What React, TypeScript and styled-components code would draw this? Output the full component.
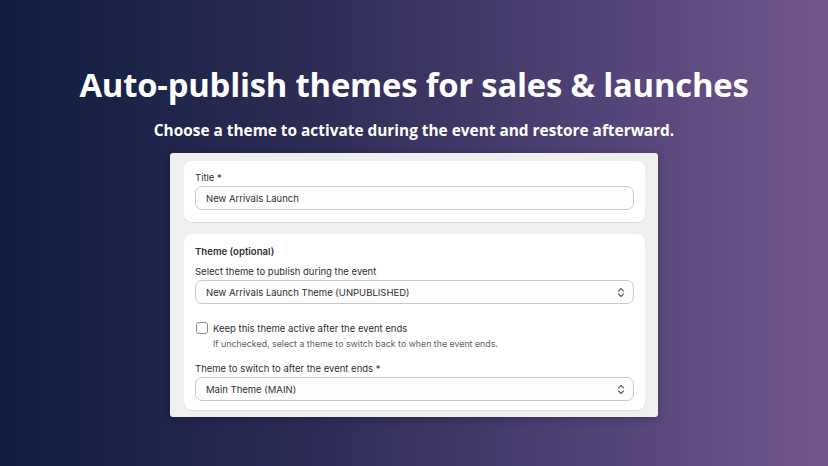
import styled, { createGlobalStyle } from 'styled-components';

const GlobalStyle = createGlobalStyle`
    html, body {
        margin: 0;
        padding: 0;
    }

    body {
        font-family: Inter, "Noto Sans", sans-serif;
    }
`;

const Page = styled.main`
    width: 828px;
    height: 466px;
    box-sizing: border-box;
    background: linear-gradient(90deg, #0f1c3e 0%, #2f2d57 40%, #54457a 75%, #72578c 100%);
    display: flex;
    flex-direction: column;
    align-items: center;
    padding-top: 63px;
    overflow: hidden;
`;

const Headline = styled.h1`
    margin: 0;
    color: #ffffff;
    font-family: "Open Sans", sans-serif;
    font-weight: 700;
    font-size: 32.8px;
    line-height: 44px;
    letter-spacing: -0.2px;
`;

const Subline = styled.p`
    margin: 14px 0 0;
    color: #ffffff;
    font-family: "Open Sans", sans-serif;
    font-weight: 700;
    font-size: 15.4px;
    line-height: 20px;
`;

const Panel = styled.section`
    margin-top: 12px;
    width: 488px;
    box-sizing: border-box;
    background: #efefef;
    border-radius: 3px;
    padding: 8px 13px 7px 14px;
    display: flex;
    flex-direction: column;
    gap: 12px;
    box-shadow: 0 2px 8px rgba(0, 0, 0, 0.25);
`;

const Card = styled.div<{ $bottom: number }>`
    background: #ffffff;
    border-radius: 8px;
    padding: 11px 11px ${(p) => p.$bottom}px;
    display: flex;
    flex-direction: column;
    box-shadow: 0 1px 0 rgba(0, 0, 0, 0.08);
`;

const Heading = styled.div`
    font-size: 9.6px;
    font-weight: 600;
    color: #303030;
    line-height: 14px;
    margin-bottom: 7px;
`;

const Label = styled.label<{ $gap?: number }>`
    font-size: 9.5px;
    color: #303030;
    line-height: 12px;
    margin-top: ${(p) => p.$gap ?? 0}px;
    margin-bottom: 2px;
`;

const Field = styled.div`
    height: 24px;
    box-sizing: border-box;
    border: 1px solid #c9c9c9;
    border-radius: 7px;
    background: #fdfdfd;
    display: flex;
    align-items: center;
    justify-content: space-between;
    padding: 0 8px 0 10px;
    font-size: 9.5px;
    color: #303030;
`;

const CheckRow = styled.div`
    display: flex;
    align-items: center;
    gap: 5px;
    margin-top: 18px;
    height: 12px;
    font-size: 9.5px;
    color: #303030;
`;

const Box = styled.span`
    width: 12px;
    height: 12px;
    box-sizing: border-box;
    border: 1px solid #8a8a8a;
    border-radius: 3px;
    background: #ffffff;
    margin-left: 1px;
`;

const Help = styled.div`
    font-size: 8.8px;
    color: #616161;
    line-height: 12px;
    margin: 4px 0 0 18px;
`;

const Chevrons = () => (
    <svg width="8" height="11" viewBox="0 0 8 11" fill="none" stroke="#616161" strokeWidth="1.1" strokeLinecap="round" strokeLinejoin="round">
        <path d="M1.5 4 L4 1.5 L6.5 4" />
        <path d="M1.5 7 L4 9.5 L6.5 7" />
    </svg>
);

const Select = ({ value }: { value: string }) => (
    <Field>
        <span>{value}</span>
        <Chevrons />
    </Field>
);

const App = () => (
    <>
        <GlobalStyle />
        <Page>
            <Headline>Auto-publish themes for sales &amp; launches</Headline>
            <Subline>Choose a theme to activate during the event and restore afterward.</Subline>
            <Panel>
                <Card $bottom={12}>
                    <Label>Title *</Label>
                    <Field>New Arrivals Launch</Field>
                </Card>
                <Card $bottom={9}>
                    <Heading>Theme (optional)</Heading>
                    <Label>Select theme to publish during the event</Label>
                    <Select value="New Arrivals Launch Theme (UNPUBLISHED)" />
                    <CheckRow>
                        <Box />
                        <span>Keep this theme active after the event ends</span>
                    </CheckRow>
                    <Help>If unchecked, select a theme to switch back to when the event ends.</Help>
                    <Label $gap={13}>Theme to switch to after the event ends *</Label>
                    <Select value="Main Theme (MAIN)" />
                </Card>
            </Panel>
        </Page>
    </>
);

export default App;
